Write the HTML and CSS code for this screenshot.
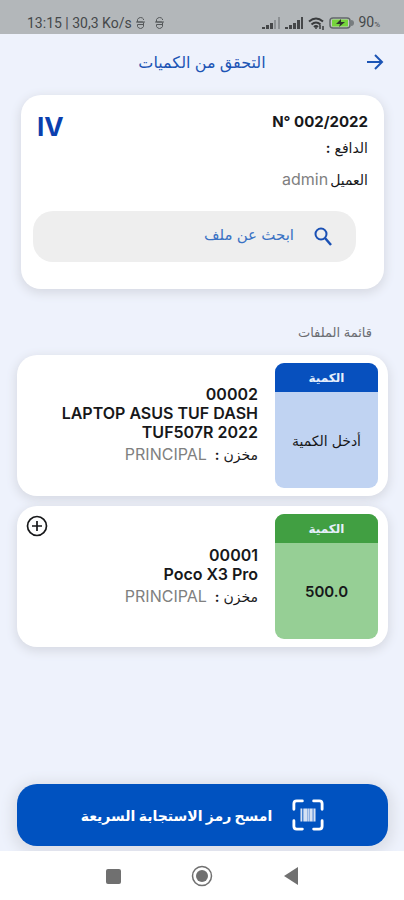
FILE: index.html
```html
<!DOCTYPE html>
<html lang="ar" dir="rtl">
<head>
<meta charset="utf-8">
<meta name="viewport" content="width=device-width, initial-scale=1">
<title>التحقق من الكميات</title>
<link rel="stylesheet" href="styles.css">
</head>
<body>
<div class="status" dir="ltr">
  <div class="status-group">
    <span>13:15 | 30,3 Ko/s</span>
    <svg class="glyph" width="9" height="12" viewBox="0 0 9 12"><path d="M7.500 3V2q-1-1.500-3-1.500T1.500 2.500V5h5q1 0 1 1v3.500q-1 2-3 2t-3-2V7.500H7M0 5h9"/></svg>
    <svg class="glyph second" width="9" height="12" viewBox="0 0 9 12"><path d="M7.500 3V2q-1-1.500-3-1.500T1.500 2.500V5h5q1 0 1 1v3.500q-1 2-3 2t-3-2V7.500H7M0 5h9"/></svg>
  </div>
  <div class="status-group icons">
    <svg width="19" height="12" viewBox="0 0 19 12"><path fill="#454749" d="M0 10h3v2H0zM4 8h3v4H4zM8 6h3v6H8z"/><path fill="#8c9093" d="M12 3h2v9h-2zM16 0h2v12h-2z"/></svg>
    <svg width="19" height="12" viewBox="0 0 19 12"><path fill="#454749" d="M0 10h3v2H0zM4 8h3v4H4zM8 6h3v6H8zM12 3h3v9h-3zM16 0h2v12h-2z"/></svg>
    <svg width="17" height="13" viewBox="0 0 17 13" fill="none" stroke="#393b3d" stroke-width="2"><path d="M1 4.500Q8 -1.500 15 4.500M3.500 7.500Q8 3.500 12.500 7.500M6 10Q8 8 10 10"/><circle cx="8" cy="11" r="1" fill="#393b3d" stroke="none"/><path stroke-width="1.500" d="M12 8v4M15 9v4"/></svg>
    <svg width="25" height="12" viewBox="0 0 25 12"><rect x="1" y="1" width="20" height="10" rx="3" fill="#c7cbc8" stroke="#62676a" stroke-width="1.500"/><path fill="#75d43b" d="M3 2.500h16v7H3z"/><path fill="#2e352c" d="M12 2 7 7h4l-1 3 6-5h-4z"/><path fill="#777c7f" d="M22 3q3 0 3 3t-3 3z"/></svg>
    <span class="percent">90<small>%</small></span>
  </div>
</div>
<header class="header">
  <button class="icon-button" type="button" aria-label="رجوع">
    <svg width="18" height="18" viewBox="0 0 18 18" fill="none" stroke="#1c55b5" stroke-width="2"><path d="M1 9h15M9 2l7 7-7 7"/></svg>
  </button>
  <h1>التحقق من الكميات</h1>
</header>
<main class="content">
  <section class="card summary">
    <div class="summary-top">
      <div class="summary-text">
        <h2 dir="ltr">N° 002/2022</h2>
        <p>الدافع <b>:</b></p>
        <p class="client">العميل<span class="muted">admin</span></p>
      </div>
      <strong class="tag">IV</strong>
    </div>
    <label class="search">
      <svg width="18" height="19" viewBox="0 0 18 19" fill="none" stroke="#1a50b4" stroke-width="2"><circle cx="7" cy="7" r="5.500"/><path stroke-width="2.500" d="m11 11 6 7"/></svg>
      <input type="text" placeholder="ابحث عن ملف" aria-label="ابحث عن ملف">
    </label>
  </section>
  <h3 class="list-title">قائمة الملفات</h3>
  <section class="list">
    <article class="card item">
      <button class="quantity" type="button">
        <span class="quantity-head">الكمية</span>
        <span class="quantity-value">أدخل الكمية</span>
      </button>
      <div class="details">
        <p class="name" dir="ltr">00002<br>LAPTOP ASUS TUF DASH TUF507R 2022</p>
        <p class="store">مخزن <b>:</b><span class="muted">PRINCIPAL</span></p>
      </div>
    </article>
    <article class="card item">
      <button class="quantity done" type="button">
        <span class="quantity-head">الكمية</span>
        <span class="quantity-value number">500.0</span>
      </button>
      <div class="details">
        <p class="name" dir="ltr">00001<br>Poco X3 Pro</p>
        <p class="store">مخزن <b>:</b><span class="muted">PRINCIPAL</span></p>
      </div>
      <button class="icon-button add" type="button" aria-label="إضافة">
        <svg width="22" height="22" viewBox="0 0 22 22" fill="none" stroke="#17181a" stroke-width="1.700"><circle cx="11" cy="11" r="9.500"/><path d="M6 11h10M11 6v10"/></svg>
      </button>
    </article>
  </section>
</main>
<footer class="action">
  <button class="scan" type="button">
    <svg width="32" height="32" viewBox="0 0 34 34" fill="none" stroke="#fff" stroke-width="3" stroke-linecap="round"><path d="M2 11V5q0-3 3-3h6M23 2h6q3 0 3 3v6M32 23v6q0 3-3 3h-6M11 32H5q-3 0-3-3v-6"/><path fill="#d5e1f3" stroke="none" d="M9 10h2v14H9zM12 10h4v14h-4zM17 10h1v14h-1zM19 10h3v14h-3zM23 10h2v14h-2z"/><path fill="#9fbce6" stroke="none" d="M16 10h1v14h-1zM18 10h1v14h-1zM22 10h1v14h-1z"/></svg>
    <span>امسح رمز الاستجابة السريعة</span>
  </button>
</footer>
<nav class="system" dir="ltr">
  <button class="icon-button" type="button" aria-label="التطبيقات"><svg width="22" height="22" viewBox="0 0 22 22"><rect x="4" y="4" width="15" height="15" rx="2" fill="#707070"/></svg></button>
  <button class="icon-button" type="button" aria-label="الرئيسية"><svg width="22" height="22" viewBox="0 0 22 22"><circle cx="11" cy="11" r="9.500" fill="none" stroke="#707070" stroke-width="1.500"/><circle cx="11" cy="11" r="6" fill="#707070"/></svg></button>
  <button class="icon-button" type="button" aria-label="السابق"><svg width="22" height="22" viewBox="0 0 22 22"><path d="M18 2v18L4 11z" fill="#707070"/></svg></button>
</nav>
</body>
</html>
```
FILE: styles.css
```css
* { box-sizing: border-box; }
body {
  margin: 0;
  min-height: 100vh;
  display: flex;
  flex-direction: column;
  background: #eef2fc;
  color: #17181a;
  font-family: Inter, "DejaVu Sans", sans-serif;
  font-size: 14px;
}
h1, h2, h3, p { margin: 0; }
button, input { font: inherit; color: inherit; }
button { border: 0; padding: 0; cursor: pointer; }
svg { display: block; flex: none; }
.icon-button { background: none; }
.icon-button svg { margin: auto; }

.status {
  height: 34px;
  padding: 12px 24px 0 27px;
  display: flex;
  justify-content: space-between;
  background: #b3b7ba;
  color: #45484a;
  font: 400 14px/22px Roboto, sans-serif;
}
.status-group { display: flex; align-items: center; gap: 4px; }
.glyph { fill: none; stroke: #55585a; stroke-width: 1; }
.second { margin-left: 6px; }
.percent small { font-size: 8px; }

.header {
  height: 56px;
  padding: 0 20px 0 16px;
  display: grid;
  grid-template-columns: 16px 1fr 20px;
  align-items: center;
}
.header .icon-button { width: 18px; }
h1 {
  text-align: center;
  color: #1c55b5;
  font-size: 16px;
  font-weight: 500;
}

.content { flex: 1; padding: 5px 16px 24px 17px; }
.card {
  background: #fff;
  border-radius: 20px;
  box-shadow: 0 3px 10px 2px #d9dce5;
}
.summary { margin: 0 4px; padding: 16px 16px 27px 12px; }
.summary-top { display: flex; justify-content: space-between; }
.summary-text { line-height: 22px; }
h2 { font-size: 15px; line-height: 22px; font-weight: 700; }
.summary-text p { margin-top: 4px; }
.summary-text .client { margin-top: 10px; }
.muted { color: #808080; font-size: 16px; line-height: 20px; font-weight: 400; }
.client .muted { margin-right: 2px; }
.tag {
  padding-left: 4px;
  color: #0b3fae;
  font-size: 26px;
  line-height: 32px;
}
.search {
  margin: 20px 12px 0 0;
  height: 51px;
  padding: 0 24px;
  display: flex;
  align-items: center;
  gap: 20px;
  border-radius: 20px;
  background: #eeeeee;
}
.search input {
  flex: 1;
  min-width: 0;
  border: 0;
  padding: 0 0 4px;
  outline: 0;
  background: none;
  font-size: 15px;
}
.search input::placeholder { color: #3a72c4; opacity: 1; }
.list-title {
  margin: 32px 16px 12px;
  color: #6b6d72;
  font-size: 13px;
  line-height: 22px;
  font-weight: 400;
}
.list { display: flex; flex-direction: column; gap: 10px; }
.item {
  position: relative;
  min-height: 141px;
  padding: 8px 10px;
  display: flex;
  gap: 17px;
}
.quantity {
  width: 103px;
  flex: none;
  display: flex;
  flex-direction: column;
  overflow: hidden;
  border-radius: 9px;
  background: #c0d3f2;
}
.quantity-head {
  width: 100%;
  background: #0750be;
  color: #e6effc;
  font-size: 12px;
  font-weight: 700;
  line-height: 29px;
}
.quantity-value {
  width: 100%;
  flex: 1;
  display: flex;
  align-items: center;
  justify-content: center;
}
.done { background: #96cf95; }
.done .quantity-head { background: #419f42; }
.number { font-size: 15px; font-weight: 600; }
.details {
  flex: 1;
  max-width: 208px;
  align-self: center;
}
.name {
  text-align: right;
  font-size: 16px;
  line-height: 19px;
  font-weight: 600;
}
.store { margin-top: 2px; line-height: 22px; }
.store .muted { margin-right: 8px; }
.add { position: absolute; top: 9px; left: 9px; }

.action { padding: 0 16px 5px 17px; }
.scan {
  width: 100%;
  height: 62px;
  display: flex;
  align-items: center;
  justify-content: center;
  gap: 20px;
  border-radius: 20px;
  background: #0052c0;
  color: #fff;
  font-size: 14px;
  font-weight: 700;
  box-shadow: 0 3px 12px 6px #dde0e9;
}
.system {
  position: relative;
  height: 49px;
  display: flex;
  align-items: center;
  justify-content: center;
  gap: 67px;
  background: #fff;
}
```
